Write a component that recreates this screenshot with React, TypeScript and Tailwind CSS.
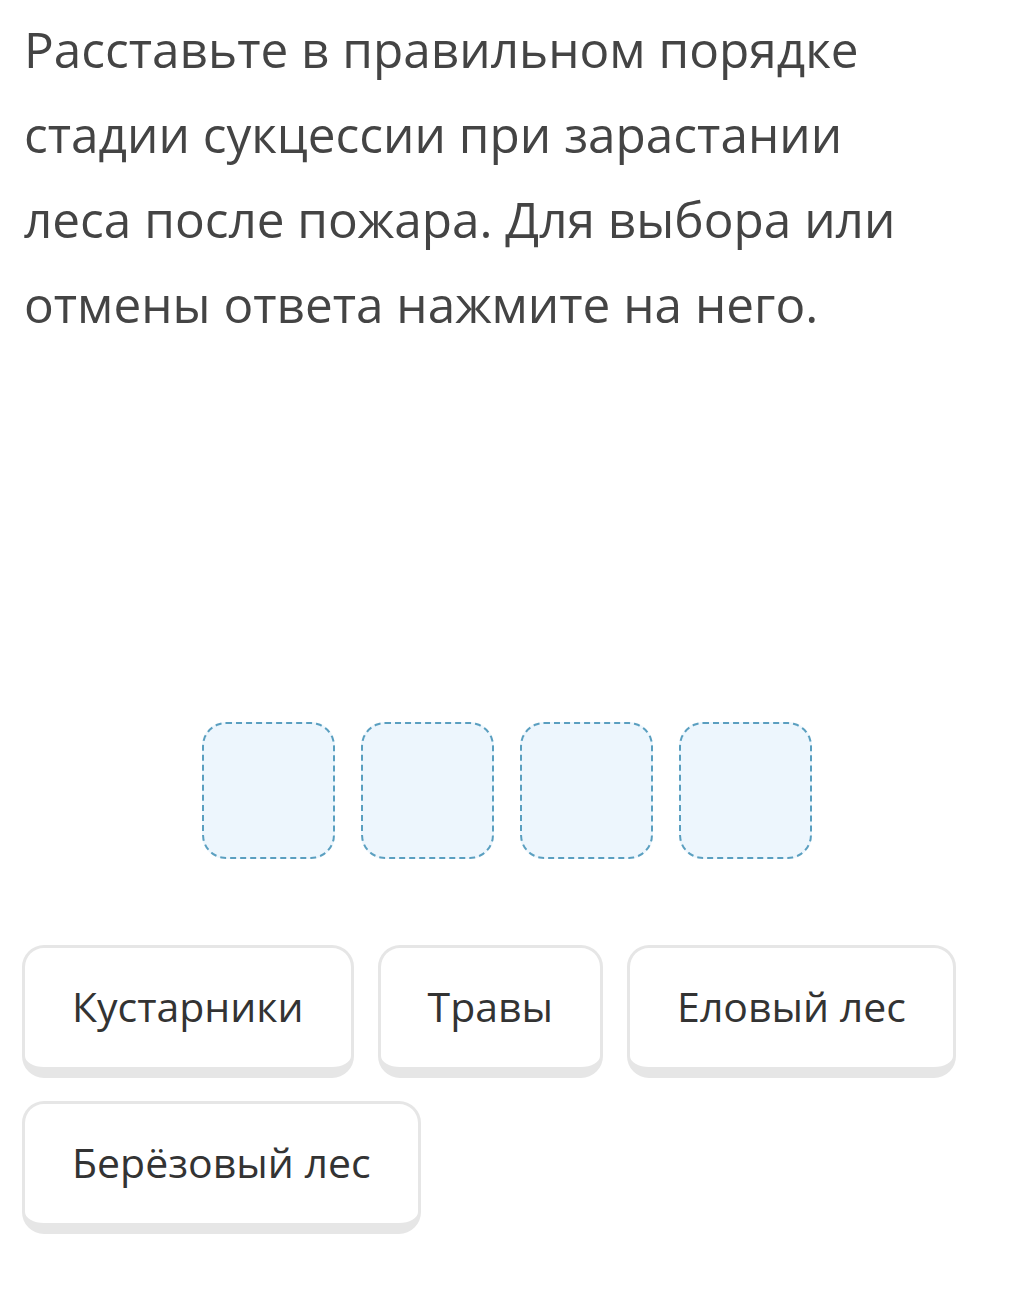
const slots = [0, 1, 2, 3]

const options = [
  ["Кустарники", "Травы", "Еловый лес"],
  ["Берёзовый лес"],
]

export default function App() {
  return (
    <div className="min-h-[1304px] w-[1021px] bg-white px-6 pt-[7px] font-['Open_Sans',sans-serif] text-[#3d3d3d]">
      <h1 className="max-w-[900px] text-[49.5px] leading-[85px] font-normal text-[#444]">
        Расставьте в правильном порядке стадии сукцессии при зарастании леса после пожара. Для выбора или отмены ответа
        нажмите на него.
      </h1>

      {/* answer slots */}
      <div className="mt-[375px] flex justify-center gap-[26px] pr-[8px]">
        {slots.map((i) => (
          <div
            key={i}
            className="h-[137px] w-[133px] rounded-[24px] border-2 border-dashed border-[#5a9fc0] bg-[#edf6fd]"
          />
        ))}
      </div>

      {/* options */}
      <div className="mt-[86px] flex flex-col gap-[23px]">
        {options.map((row, r) => (
          <div key={r} className="-ml-[2px] flex gap-[24px]">
            {row.map((label) => (
              <button
                key={label}
                className="flex h-[133px] items-center rounded-[22px] border-[3px] border-b-[11px] border-[#e6e6e6] bg-white px-[47px] pb-[2px] text-[41px] text-[#333]"
              >
                {label}
              </button>
            ))}
          </div>
        ))}
      </div>
    </div>
  )
}
